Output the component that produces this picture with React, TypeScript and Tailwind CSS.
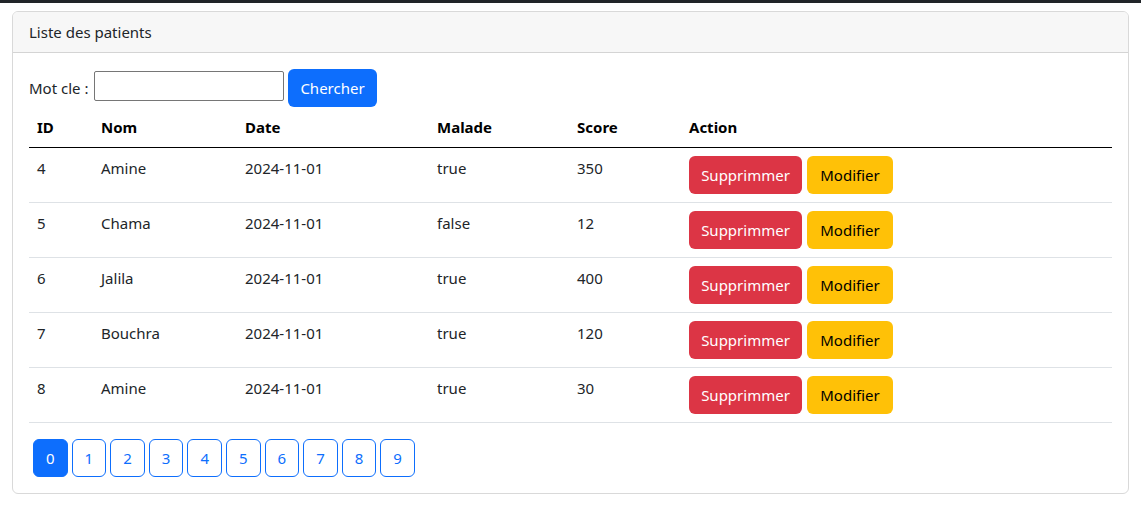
import React from "react";

const rows = [
  { id: 4, nom: "Amine", date: "2024-11-01", malade: "true", score: 350 },
  { id: 5, nom: "Chama", date: "2024-11-01", malade: "false", score: 12 },
  { id: 6, nom: "Jalila", date: "2024-11-01", malade: "true", score: 400 },
  { id: 7, nom: "Bouchra", date: "2024-11-01", malade: "true", score: 120 },
  { id: 8, nom: "Amine", date: "2024-11-01", malade: "true", score: 30 },
];

export default function App() {
  return (
    <div
      className="min-h-screen bg-white text-[#212529] text-[16px] leading-6"
      style={{ fontFamily: '"Noto Sans", "Open Sans", sans-serif' }}
    >
      <div className="h-[3px] bg-[#212529]" />
      <div className="mx-3 mt-2 border border-[#d9d9d9] rounded-[6px] overflow-hidden">
        <div className="px-4 py-2 bg-[#f7f7f7] border-b border-[#d4d4d4] text-[15px]">
          Liste des patients
        </div>
        <div className="p-4">
          <div className="flex items-start h-[38px]">
            <span className="text-[15px] mr-[4px] mt-[7px] w-[61px]">Mot cle :</span>
            <input
              className="mt-[2px] w-[190px] h-[30px] border border-[#767676] rounded-[2px] px-1 outline-none"
              type="text"
            />
            <button className="ml-[4px] w-[89px] h-[38px] rounded-[6px] bg-[#0d6efd] text-white text-[15px]">
              Chercher
            </button>
          </div>
          <table className="w-full border-collapse text-[15px]">
            <colgroup>
              <col className="w-[64px]" />
              <col className="w-[144px]" />
              <col className="w-[192px]" />
              <col className="w-[140px]" />
              <col className="w-[112px]" />
              <col />
            </colgroup>
            <thead>
              <tr className="border-b border-black">
                <th className="text-left font-bold text-black px-2 py-2 h-[40px]">ID</th>
                <th className="text-left font-bold text-black px-2 py-2">Nom</th>
                <th className="text-left font-bold text-black px-2 py-2">Date</th>
                <th className="text-left font-bold text-black px-2 py-2">Malade</th>
                <th className="text-left font-bold text-black px-2 py-2">Score</th>
                <th className="text-left font-bold text-black px-2 py-2">Action</th>
              </tr>
            </thead>
            <tbody>
              {rows.map((r) => (
                <tr key={r.id} className="border-b border-[#dee2e6]">
                  <td className="align-top px-2 py-2 h-[54px]">{r.id}</td>
                  <td className="align-top px-2 py-2">{r.nom}</td>
                  <td className="align-top px-2 py-2">{r.date}</td>
                  <td className="align-top px-2 py-2">{r.malade}</td>
                  <td className="align-top px-2 py-2">{r.score}</td>
                  <td className="align-top px-2 py-2">
                    <div className="flex gap-[5px]">
                      <button className="w-[113px] h-[38px] rounded-[6px] bg-[#dc3545] text-white">
                        Supprimmer
                      </button>
                      <button className="w-[86px] h-[38px] rounded-[6px] bg-[#ffc107] text-black">
                        Modifier
                      </button>
                    </div>
                  </td>
                </tr>
              ))}
            </tbody>
          </table>
          <div className="flex gap-[4px] mt-4 pl-1">
            {Array.from({ length: 10 }, (_, i) => (
              <button
                key={i}
                className={
                  i === 0
                    ? "w-[34.6px] h-[38px] rounded-[6px] border border-[#0d6efd] bg-[#0d6efd] text-white text-[15px]"
                    : "w-[34.6px] h-[38px] rounded-[6px] border border-[#0d6efd] bg-white text-[#0d6efd] text-[15px]"
                }
              >
                {i}
              </button>
            ))}
          </div>
        </div>
      </div>
    </div>
  );
}
